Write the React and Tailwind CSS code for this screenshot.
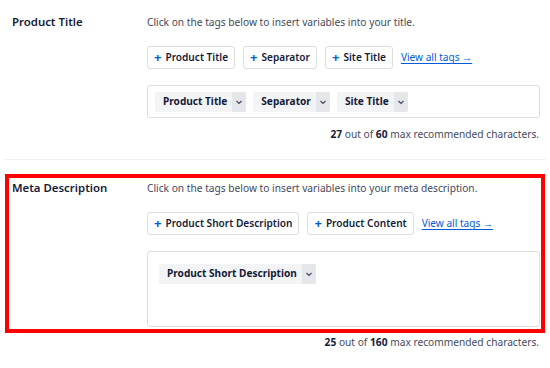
import React from 'react';

const FONT = "font-['Noto_Sans',sans-serif]";

function AddButton({ label }) {
  return (
    <button className="h-[23px] px-[6px] flex items-center gap-[4px] border border-[#dcdde1] rounded-[3px] bg-white text-[10.1px] font-semibold text-[#141b38] leading-none">
      <span className="text-[#005ae0] text-[13px] font-bold leading-none">+</span>
      {label}
    </button>
  );
}

function TagPill({ label }) {
  return (
    <div className="h-[20px] flex items-stretch rounded-[2px] bg-[#f3f4f5] text-[10.1px] font-bold text-[#141b38]">
      <span className="pl-[8px] pr-[5px] flex items-center">{label}</span>
      <span className="w-[14px] flex items-center justify-center bg-[#e5e6ea] rounded-r-[2px]">
        <svg width="8" height="8" viewBox="0 0 8 8" fill="none" stroke="#434960" strokeWidth="1.2">
          <path d="M1.5 3l2.5 2.5L6.5 3" />
        </svg>
      </span>
    </div>
  );
}

function Row({ label, description, buttons, tags, tall, highlighted }) {
  return (
    <div className={`mx-[5px] border-4 ${highlighted ? 'border-[#ff0000]' : 'border-transparent'} flex pl-[3px] pr-[1px] pt-[2px] pb-[2px]`}>
      <div className="w-[135px] text-[11.4px] font-semibold text-[#141b38] leading-[16px]">{label}</div>
      <div className="flex-1">
        <p className="h-[16px] text-[10.2px] text-[#434960] leading-[16px]">{description}</p>
        <div className="h-[23px] flex items-center gap-[8px] mt-[16px]">
          {buttons.map((b) => (
            <AddButton key={b} label={b} />
          ))}
          <a className="text-[10.1px] text-[#005ae0] underline underline-offset-2">View all tags →</a>
        </div>
        <div
          className={`mt-[16px] border border-[#dcdde1] rounded-[3px] bg-white flex gap-[7px] ${
            tall ? 'h-[76px] pl-[11px] pt-[12px] items-start' : 'h-[33px] pl-[7px] items-center'
          }`}
        >
          {tags.map((t) => (
            <TagPill key={t} label={t} />
          ))}
        </div>
      </div>
    </div>
  );
}

function Counter({ count, max }) {
  return (
    <p className="h-[16px] pr-[11px] text-right text-[10.2px] text-[#434960] leading-[16px]">
      <span className="font-bold text-[#141b38]">{count}</span> out of{' '}
      <span className="font-bold text-[#141b38]">{max}</span> max recommended characters.
    </p>
  );
}

export default function App() {
  return (
    <div className={`w-[550px] h-[368px] bg-white overflow-hidden ${FONT}`}>
      <div className="pt-[8px]">
        <Row
          label="Product Title"
          description="Click on the tags below to insert variables into your title."
          buttons={['Product Title', 'Separator', 'Site Title']}
          tags={['Product Title', 'Separator', 'Site Title']}
        />
        <div className="mt-[2px]">
          <Counter count="27" max="60" />
        </div>
        <div className="mx-[5px] mt-[17px] border-t border-[#eeeeee]" />
        <div className="mt-[14px]">
          <Row
            highlighted
            tall
            label="Meta Description"
            description="Click on the tags below to insert variables into your meta description."
            buttons={['Product Short Description', 'Product Content']}
            tags={['Product Short Description']}
          />
        </div>
        <div className="mt-[1px]">
          <Counter count="25" max="160" />
        </div>
      </div>
    </div>
  );
}
